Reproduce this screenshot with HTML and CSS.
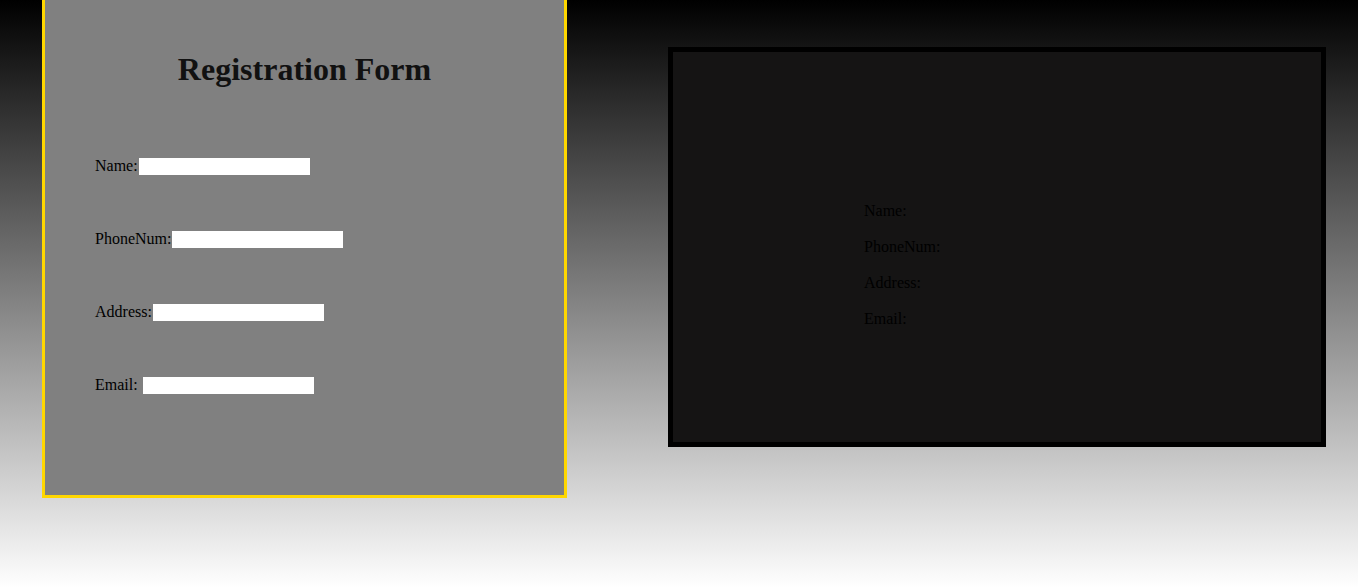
FILE: index.html
```html
<!DOCTYPE html>
<html lang="en">

<head>
  <meta charset="UTF-8">
  <meta name="viewport" content="width=device-width, initial-scale=1.0">
  <title>Registration Form</title>
  <link rel="stylesheet" href="styles.css">
</head>

<body>
  <div class="page">
    <!-- Form card -->
    <form class="form-card">
      <h1>Registration Form</h1>
      <div class="field">Name:<input type="text" id="name"></div>
      <div class="field">PhoneNum:<input type="text" id="phone"></div>
      <div class="field">Address:<input type="text" id="address"></div>
      <div class="field">Email: <input type="text" id="email"></div>
    </form>

    <!-- Output card -->
    <div class="output-card">
      <div class="out-row">Name:</div>
      <div class="out-row">PhoneNum:</div>
      <div class="out-row">Address:</div>
      <div class="out-row">Email:</div>
    </div>
  </div>
</body>

</html>
```

FILE: styles.css
```css
body {
  margin: 0;
  height: 100vh;
  overflow: hidden;
  font-family: "Liberation Serif", "Times New Roman", serif;
  font-size: 16px;
  background: linear-gradient(#000000, #ffffff);
}

.page {
  display: flex;
  align-items: flex-start;
  gap: 101px;
  padding-left: 42px;
}

.form-card {
  margin-top: -10px;
  width: 519px;
  height: 502px;
  box-sizing: content-box;
  border: 3px solid #ffd700;
  background: #808080;
  padding: 0;
}

.form-card h1 {
  margin: 58px 0 68px;
  text-align: center;
  font-size: 32px;
  color: #111;
}

.field {
  height: 20px;
  line-height: 20px;
  margin: 0 0 53px 50px;
  color: #000;
}

.field input {
  width: 171px;
  height: 17px;
  box-sizing: border-box;
  border: none;
  margin-left: 1px;
  padding: 1px 2px;
  background: #fff;
  font-size: 13.33px;
  vertical-align: baseline;
}

.output-card {
  margin-top: 47px;
  width: 648px;
  height: 390px;
  border: 5px solid #000;
  background: #151414;
  padding: 0;
  box-sizing: content-box;
}

.out-row {
  height: 20px;
  line-height: 20px;
  margin-left: 191px;
  margin-bottom: 16px;
  color: #000;
}

.out-row:first-child {
  margin-top: 149px;
}
```
